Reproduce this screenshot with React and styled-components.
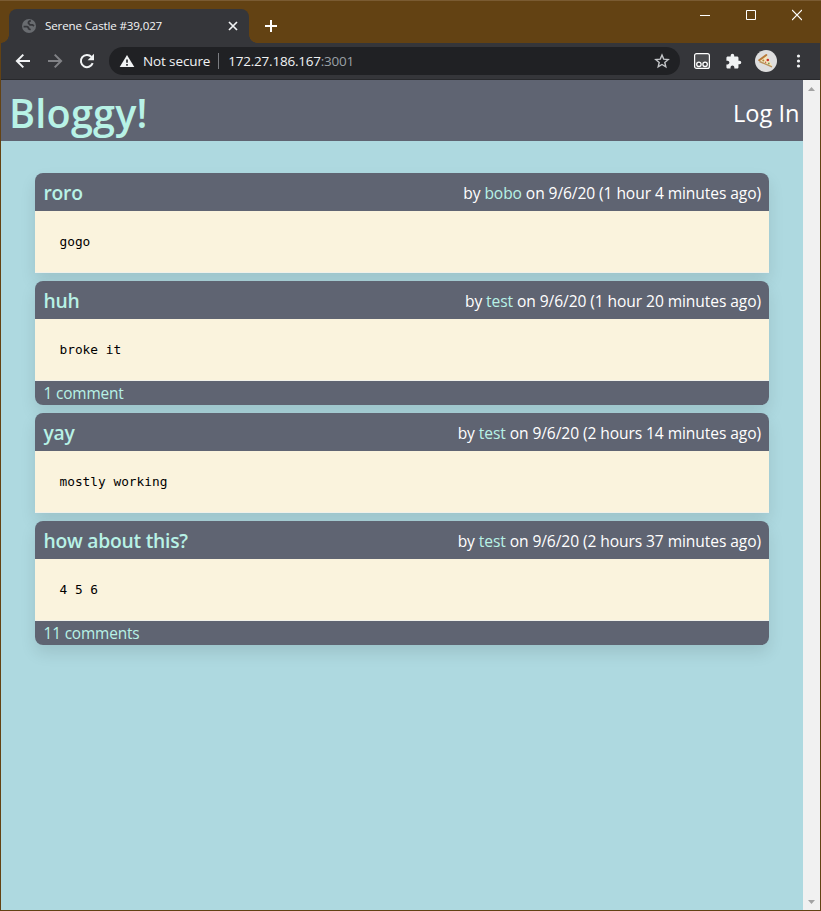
import React from "react";
import styled, { createGlobalStyle } from "styled-components";

const SANS = '"Open Sans", "Noto Sans", sans-serif';
const MONO = '"DejaVu Sans Mono", monospace';
const SLATE = "#5f6472";
const MINT = "#b8f2e6";

const Global = createGlobalStyle`
  *, *::before, *::after { box-sizing: border-box; }
  body { margin: 0; font-family: ${SANS}; }
  svg { flex: none; }
`;

const Window = styled.div`
  display: flex;
  flex-direction: column;
  width: 821px;
  height: 911px;
  padding: 0 1px 1px;
  background: #634213;
  overflow: hidden;
`;

const TabStrip = styled.div`
  display: flex;
  align-items: flex-start;
  flex: none;
  height: 43px;
  padding: 8px 1px 0 9px;
  margin: 0 -1px;
  border-top: 1px solid #7a5b32;
`;

const Tab = styled.div`
  position: relative;
  display: flex;
  align-items: center;
  width: 240px;
  height: 34px;
  padding: 0 9px 0 12px;
  border-radius: 8px 8px 0 0;
  background: #35363a;
  &::before, &::after {
    content: "";
    position: absolute;
    bottom: 0;
    width: 8px;
    height: 8px;
  }
  &::before {
    left: -8px;
    background: radial-gradient(circle at 0 0, transparent 7.5px, #35363a 8px);
  }
  &::after {
    right: -8px;
    background: radial-gradient(circle at 100% 0, transparent 7.5px, #35363a 8px);
  }
`;

const TabTitle = styled.span`
  flex: 1;
  margin-left: 8px;
  color: #f4f5f6;
  font-size: 11.6px;
  line-height: 16px;
  letter-spacing: -0.15px;
  white-space: nowrap;
`;

const NewTab = styled.div`
  display: flex;
  margin: 11px 0 0 16px;
`;

const WindowControls = styled.div`
  display: flex;
  margin-left: auto;
`;

const Control = styled.div`
  display: flex;
  justify-content: center;
  width: 46px;
`;

const Toolbar = styled.div`
  display: flex;
  align-items: center;
  flex: none;
  height: 37px;
  padding: 0 17px 0 14px;
  border-bottom: 1px solid #28292c;
  background: #35363a;
`;

const Navigation = styled.div`
  display: flex;
  gap: 16px;
`;

const AddressBar = styled.div`
  display: flex;
  align-items: center;
  flex: none;
  width: 571px;
  height: 28px;
  margin-left: 14px;
  padding: 0 10px;
  border-radius: 14px;
  background: #202124;
  color: #f1f3f4;
  font-size: 13.5px;
  line-height: 20px;
`;

const Security = styled.span`
  margin-left: 8px;
  letter-spacing: -0.12px;
`;

const Separator = styled.span`
  width: 1px;
  height: 16px;
  margin: 0 9px 0 8px;
  background: #7a7c80;
`;

const Url = styled.span`
  flex: 1;
  letter-spacing: -0.22px;
`;

const Port = styled.span`
  color: #9aa0a6;
`;

const Extensions = styled.div`
  display: flex;
  align-items: center;
  flex: none;
  margin-left: 14px;
  gap: 15px;
`;

const Avatar = styled.div`
  display: flex;
  align-items: center;
  justify-content: center;
  width: 22px;
  height: 22px;
  margin: 0 4px 0 -2px;
  border-radius: 50%;
  background: #dedede;
`;

const Viewport = styled.div`
  display: flex;
  flex: 1;
  min-height: 0;
`;

const Page = styled.div`
  flex: 1;
  background: #aed9e0;
`;

const ScrollTrack = styled.div`
  display: flex;
  flex-direction: column;
  justify-content: space-between;
  align-items: center;
  width: 17px;
  padding: 7px 0 6px;
  background: #f1f1f1;
`;

const Header = styled.header`
  display: flex;
  align-items: center;
  justify-content: space-between;
  height: 61px;
  padding: 0 3.5px 0 8px;
  background: ${SLATE};
`;

const Brand = styled.h1`
  margin: 4px 0 0;
  color: ${MINT};
  font-size: 39.6px;
  font-weight: 600;
  line-height: 48px;
  letter-spacing: 0.2px;
`;

const LogIn = styled.a`
  margin-top: 4px;
  color: #fff;
  font-size: 23.6px;
  line-height: 36px;
`;

const Posts = styled.main`
  display: flex;
  flex-direction: column;
  gap: 8px;
  padding: 32px 34px;
`;

const Post = styled.article`
  border-radius: ${(p) => (p.$footer ? "8px" : "8px 8px 0 0")};
  box-shadow: 0 8px 16px rgba(0, 0, 0, 0.1);
`;

const PostHead = styled.div`
  display: flex;
  align-items: center;
  justify-content: space-between;
  height: 38px;
  padding: 2px 8px 0 8.5px;
  border-radius: 8px 8px 0 0;
  background: ${SLATE};
`;

const PostTitle = styled.h2`
  margin: 0;
  color: ${MINT};
  font-size: 19.3px;
  font-weight: 600;
  line-height: 28px;
  letter-spacing: -0.24px;
`;

const Meta = styled.span`
  color: #fff;
  font-size: 15.6px;
  line-height: 24px;
  letter-spacing: -0.09px;
`;

const Author = styled.a`
  color: ${MINT};
`;

const PostBody = styled.pre`
  height: 62px;
  margin: 0;
  padding: 21px 24px 0 24.5px;
  border-bottom: 1px solid #f1f1e9;
  background: #faf3dd;
  color: #000;
  font: 12.8px/20px ${MONO};
`;

const PostFoot = styled.div`
  height: 24px;
  padding: 0 8.5px;
  border-radius: 0 0 8px 8px;
  background: ${SLATE};
  color: ${MINT};
  font-size: 15.4px;
  line-height: 25px;
  letter-spacing: -0.15px;
`;

const posts = [
  { title: "roro", author: "bobo", when: "1 hour 4 minutes ago", body: "gogo" },
  { title: "huh", author: "test", when: "1 hour 20 minutes ago", body: "broke it", comments: "1 comment" },
  { title: "yay", author: "test", when: "2 hours 14 minutes ago", body: "mostly working" },
  { title: "how about this?", author: "test", when: "2 hours 37 minutes ago", body: "4 5 6", comments: "11 comments" },
];

const Globe = () => (
  <svg width="16" height="16" viewBox="0 0 16 16">
    <circle cx="8" cy="8" r="7" fill="#696c70" />
    <path d="M9.8 2.600Q7.200 3.200 7.400 5.200L9 6.800H11.500L13 8M2.600 8.600H6Q7.800 9 7.600 10.800L9.600 11.800" fill="none" stroke="#35363a" strokeWidth="1.700" />
  </svg>
);

const CloseTab = () => (
  <svg width="14" height="14" viewBox="0 0 14 14" stroke="#f1f3f4" strokeWidth="1.7">
    <path d="m3 3 8 8m0-8-8 8" />
  </svg>
);

const Back = () => (
  <svg width="16" height="16" viewBox="0 0 16 16" fill="none" stroke="#f1f3f4" strokeWidth="2">
    <path d="M15 8H2.4M8.3 1.6 1.9 8l6.4 6.4" />
  </svg>
);

const Forward = () => (
  <svg width="16" height="16" viewBox="0 0 16 16" fill="none" stroke="#818286" strokeWidth="2">
    <path d="M1 8h12.6M7.7 1.6 14.1 8l-6.4 6.4" />
  </svg>
);

const Reload = () => (
  <svg width="16" height="16" viewBox="0 0 16 16">
    <path d="M13.7 10.2A6.1 6.1 0 1 1 12.5 3.9" fill="none" stroke="#f1f3f4" strokeWidth="2" />
    <path d="M15 .8v6.4H8.6z" fill="#f1f3f4" />
  </svg>
);

const Warning = () => (
  <svg width="16" height="16" viewBox="0 0 16 16">
    <path d="M8 2 15.3 14H.7z" fill="#f1f3f4" />
    <path d="M8 6.5v3.3M8 11v1.7" stroke="#202124" strokeWidth="1.6" />
  </svg>
);

const Star = () => (
  <svg width="16" height="16" viewBox="0 0 16 16" fill="none" stroke="#c4c6c9" strokeWidth="1.4">
    <path d="m8 2 1.7 4.1 4.5.4-3.4 2.9 1 4.4L8 11.5l-3.8 2.3 1-4.4-3.4-2.9 4.5-.4z" />
  </svg>
);

const Goggles = () => (
  <svg width="16" height="16" viewBox="0 0 16 16">
    <rect x=".6" y=".6" width="14.8" height="14.8" rx="2" fill="#4b4c4f" stroke="#fff" strokeWidth="1.2" />
    <g fill="#35363a" stroke="#fff" strokeWidth="1.3">
      <circle cx="4.9" cy="11.3" r="2.2" />
      <circle cx="11.1" cy="11.3" r="2.2" />
    </g>
  </svg>
);

const Puzzle = () => (
  <svg width="17" height="17" viewBox="0 0 24 24" fill="#f1f3f4">
    <path d="M20.5 11H19V7c0-1.1-.9-2-2-2h-4V3.5a2.5 2.5 0 0 0-5 0V5H4c-1.1 0-1.990.9-1.990 2v3.8H3.5c1.490 0 2.7 1.210 2.7 2.7s-1.210 2.7-2.7 2.7H2V20c0 1.1.9 2 2 2h3.8v-1.5c0-1.490 1.210-2.7 2.7-2.7s2.7 1.210 2.7 2.7V22H17c1.1 0 2-.9 2-2v-4h1.5a2.5 2.5 0 0 0 0-5z" />
  </svg>
);

const Pizza = () => (
  <svg width="16" height="16" viewBox="0 0 16 16">
    <path d="M1 7.5 8.5 2 14.5 13.5z" fill="#f3e6bd" />
    <path d="M1.2 7.2 8.3 2" fill="none" stroke="#b87a3a" strokeWidth="2" strokeLinecap="round" />
    <path d="m1.5 8.5 12.5 5.3" stroke="#b99159" strokeWidth="1.4" />
    <circle cx="9.8" cy="7" r="1.3" fill="#c92f2d" />
    <circle cx="5.3" cy="7.5" r="1" fill="#b5893c" />
    <circle cx="10.8" cy="10.5" r=".9" fill="#7f9a55" />
    <circle cx="7.6" cy="9.3" r=".7" fill="#c9523d" />
  </svg>
);

const Dots = () => (
  <svg width="5" height="16" viewBox="0 0 5 16" fill="#f1f3f4">
    <circle cx="2.5" cy="3" r="1.6" />
    <circle cx="2.5" cy="8" r="1.6" />
    <circle cx="2.5" cy="13" r="1.6" />
  </svg>
);

export default function App() {
  return (
    <Window>
      <Global />
      <TabStrip>
        <Tab>
          <Globe />
          <TabTitle>Serene Castle #39,027</TabTitle>
          <CloseTab />
        </Tab>
        <NewTab>
          <svg width="12" height="12" viewBox="0 0 12 12" stroke="#fff" strokeWidth="2">
            <path d="M6 0v12M0 6h12" />
          </svg>
        </NewTab>
        <WindowControls>
          <Control>
            <svg width="10" height="12" viewBox="0 0 10 12"><path d="M0 6.5h10" stroke="#fff" /></svg>
          </Control>
          <Control>
            <svg width="10" height="12" viewBox="0 0 10 12"><path d="M.5 1.5h9v9h-9z" fill="none" stroke="#fff" /></svg>
          </Control>
          <Control>
            <svg width="10" height="12" viewBox="0 0 10 12"><path d="m0 1 10 10m0-10L0 11" stroke="#fff" strokeWidth="1.2" /></svg>
          </Control>
        </WindowControls>
      </TabStrip>
      <Toolbar>
        <Navigation>
          <Back />
          <Forward />
          <Reload />
        </Navigation>
        <AddressBar>
          <Warning />
          <Security>Not secure</Security>
          <Separator />
          <Url>172.27.186.167<Port>:3001</Port></Url>
          <Star />
        </AddressBar>
        <Extensions>
          <Goggles />
          <Puzzle />
          <Avatar><Pizza /></Avatar>
          <Dots />
        </Extensions>
      </Toolbar>
      <Viewport>
        <Page>
          <Header>
            <Brand>Bloggy!</Brand>
            <LogIn>Log In</LogIn>
          </Header>
          <Posts>
            {posts.map((p) => (
              <Post key={p.title} $footer={!!p.comments}>
                <PostHead>
                  <PostTitle>{p.title}</PostTitle>
                  <Meta>
                    by <Author>{p.author}</Author> on 9/6/20 ({p.when})
                  </Meta>
                </PostHead>
                <PostBody>{p.body}</PostBody>
                {p.comments && <PostFoot>{p.comments}</PostFoot>}
              </Post>
            ))}
          </Posts>
        </Page>
        <ScrollTrack>
          <svg width="7" height="4" viewBox="0 0 7 4"><path d="M0 4 3.5 0 7 4z" fill="#a3a3a3" /></svg>
          <svg width="7" height="4" viewBox="0 0 7 4"><path d="m0 0 3.5 4L7 0z" fill="#a3a3a3" /></svg>
        </ScrollTrack>
      </Viewport>
    </Window>
  );
}
